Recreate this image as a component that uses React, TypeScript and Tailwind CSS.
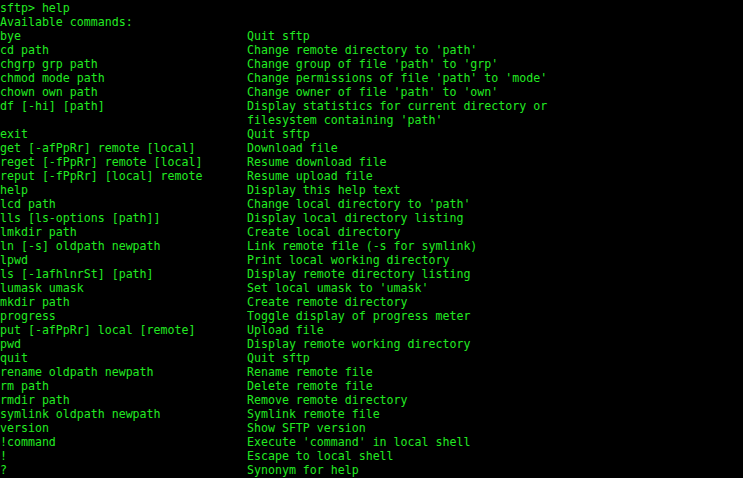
import React from 'react';

const commands: [string, string][] = [
  ['bye', 'Quit sftp'],
  ['cd path', "Change remote directory to 'path'"],
  ['chgrp grp path', "Change group of file 'path' to 'grp'"],
  ['chmod mode path', "Change permissions of file 'path' to 'mode'"],
  ['chown own path', "Change owner of file 'path' to 'own'"],
  ['df [-hi] [path]', 'Display statistics for current directory or'],
  ['', "filesystem containing 'path'"],
  ['exit', 'Quit sftp'],
  ['get [-afPpRr] remote [local]', 'Download file'],
  ['reget [-fPpRr] remote [local]', 'Resume download file'],
  ['reput [-fPpRr] [local] remote', 'Resume upload file'],
  ['help', 'Display this help text'],
  ['lcd path', "Change local directory to 'path'"],
  ['lls [ls-options [path]]', 'Display local directory listing'],
  ['lmkdir path', 'Create local directory'],
  ['ln [-s] oldpath newpath', 'Link remote file (-s for symlink)'],
  ['lpwd', 'Print local working directory'],
  ['ls [-1afhlnrSt] [path]', 'Display remote directory listing'],
  ['lumask umask', "Set local umask to 'umask'"],
  ['mkdir path', 'Create remote directory'],
  ['progress', 'Toggle display of progress meter'],
  ['put [-afPpRr] local [remote]', 'Upload file'],
  ['pwd', 'Display remote working directory'],
  ['quit', 'Quit sftp'],
  ['rename oldpath newpath', 'Rename remote file'],
  ['rm path', 'Delete remote file'],
  ['rmdir path', 'Remove remote directory'],
  ['symlink oldpath newpath', 'Symlink remote file'],
  ['version', 'Show SFTP version'],
  ['!command', "Execute 'command' in local shell"],
  ['!', 'Escape to local shell'],
  ['?', 'Synonym for help'],
];

const App: React.FC = () => {
  return (
    <div className="w-[743px] h-[478px] bg-black overflow-hidden pt-px text-[#22ea22] font-['DejaVu_Sans_Mono',monospace] text-[11.6px] leading-[14px] whitespace-pre">
      <div>sftp&gt; help</div>
      <div>Available commands:</div>
      {commands.map(([cmd, desc], i) => (
        <div key={i} className="flex">
          <span className="w-[247px] shrink-0">{cmd}</span>
          <span>{desc}</span>
        </div>
      ))}
    </div>
  );
};

export default App;
